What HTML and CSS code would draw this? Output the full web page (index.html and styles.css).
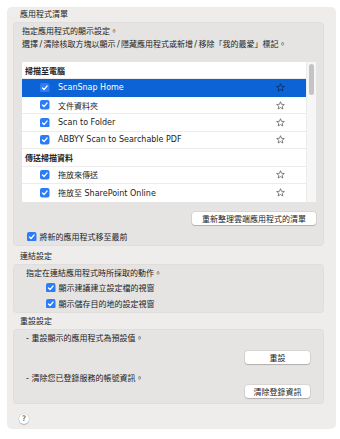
FILE: index.html
```html
<!DOCTYPE html>
<html lang="zh-Hant">
<head>
<meta charset="utf-8">
<link rel="stylesheet" href="styles.css">
</head>
<body>
<div class="panel">
  <div class="title">應用程式清單</div>
  <div class="box box-apps">
    <p class="desc">指定應用程式的顯示設定。<br>選擇<span class="sl">/</span>清除核取方塊以顯示<span class="sl">/</span>隱藏應用程式或新增<span class="sl">/</span>移除「我的最愛」標記。</p>
    <div class="list">
      <div class="rows">
        <div class="row group">掃描至電腦</div>
        <div class="row item selected">
          <svg class="cb" viewBox="0 0 10 10"><rect width="10" height="10" rx="2.2" fill="#2b7cf6"/><path d="M2.6 5.2 L4.3 6.9 L7.5 3.1" fill="none" stroke="#fff" stroke-width="1.4" stroke-linecap="round" stroke-linejoin="round"/></svg>
          <span class="name">ScanSnap Home</span>
          <svg class="star" viewBox="0 0 10 10"><polygon points="5,0.8 6.18,3.68 9.28,3.91 6.9,5.92 7.65,8.94 5,7.3 2.35,8.94 3.1,5.92 0.72,3.91 3.82,3.68"/></svg>
        </div>
        <div class="row item">
          <svg class="cb" viewBox="0 0 10 10"><rect width="10" height="10" rx="2.2" fill="#2b7cf6"/><path d="M2.6 5.2 L4.3 6.9 L7.5 3.1" fill="none" stroke="#fff" stroke-width="1.4" stroke-linecap="round" stroke-linejoin="round"/></svg>
          <span class="name">文件資料夾</span>
          <svg class="star" viewBox="0 0 10 10"><polygon points="5,0.8 6.18,3.68 9.28,3.91 6.9,5.92 7.65,8.94 5,7.3 2.35,8.94 3.1,5.92 0.72,3.91 3.82,3.68"/></svg>
        </div>
        <div class="row item">
          <svg class="cb" viewBox="0 0 10 10"><rect width="10" height="10" rx="2.2" fill="#2b7cf6"/><path d="M2.6 5.2 L4.3 6.9 L7.5 3.1" fill="none" stroke="#fff" stroke-width="1.4" stroke-linecap="round" stroke-linejoin="round"/></svg>
          <span class="name">Scan to Folder</span>
          <svg class="star" viewBox="0 0 10 10"><polygon points="5,0.8 6.18,3.68 9.28,3.91 6.9,5.92 7.65,8.94 5,7.3 2.35,8.94 3.1,5.92 0.72,3.91 3.82,3.68"/></svg>
        </div>
        <div class="row item">
          <svg class="cb" viewBox="0 0 10 10"><rect width="10" height="10" rx="2.2" fill="#2b7cf6"/><path d="M2.6 5.2 L4.3 6.9 L7.5 3.1" fill="none" stroke="#fff" stroke-width="1.4" stroke-linecap="round" stroke-linejoin="round"/></svg>
          <span class="name">ABBYY Scan to Searchable PDF</span>
          <svg class="star" viewBox="0 0 10 10"><polygon points="5,0.8 6.18,3.68 9.28,3.91 6.9,5.92 7.65,8.94 5,7.3 2.35,8.94 3.1,5.92 0.72,3.91 3.82,3.68"/></svg>
        </div>
        <div class="row group">傳送掃描資料</div>
        <div class="row item">
          <svg class="cb" viewBox="0 0 10 10"><rect width="10" height="10" rx="2.2" fill="#2b7cf6"/><path d="M2.6 5.2 L4.3 6.9 L7.5 3.1" fill="none" stroke="#fff" stroke-width="1.4" stroke-linecap="round" stroke-linejoin="round"/></svg>
          <span class="name">拖放來傳送</span>
          <svg class="star" viewBox="0 0 10 10"><polygon points="5,0.8 6.18,3.68 9.28,3.91 6.9,5.92 7.65,8.94 5,7.3 2.35,8.94 3.1,5.92 0.72,3.91 3.82,3.68"/></svg>
        </div>
        <div class="row item last">
          <svg class="cb" viewBox="0 0 10 10"><rect width="10" height="10" rx="2.2" fill="#2b7cf6"/><path d="M2.6 5.2 L4.3 6.9 L7.5 3.1" fill="none" stroke="#fff" stroke-width="1.4" stroke-linecap="round" stroke-linejoin="round"/></svg>
          <span class="name">拖放至 SharePoint Online</span>
          <svg class="star" viewBox="0 0 10 10"><polygon points="5,0.8 6.18,3.68 9.28,3.91 6.9,5.92 7.65,8.94 5,7.3 2.35,8.94 3.1,5.92 0.72,3.91 3.82,3.68"/></svg>
        </div>
      </div>
      <div class="track"><div class="thumb"></div></div>
    </div>
    <div class="btn-row"><span class="btn btn-refresh">重新整理雲端應用程式的清單</span></div>
    <div class="check-row front">
      <svg class="cb" viewBox="0 0 10 10"><rect width="10" height="10" rx="2.2" fill="#2b7cf6"/><path d="M2.6 5.2 L4.3 6.9 L7.5 3.1" fill="none" stroke="#fff" stroke-width="1.4" stroke-linecap="round" stroke-linejoin="round"/></svg>
      <span>將新的應用程式移至最前</span>
    </div>
  </div>

  <div class="title t2">連結設定</div>
  <div class="box box-link">
    <p class="line">指定在連結應用程式時所採取的動作。</p>
    <div class="check-row opt">
      <svg class="cb" viewBox="0 0 10 10"><rect width="10" height="10" rx="2.2" fill="#2b7cf6"/><path d="M2.6 5.2 L4.3 6.9 L7.5 3.1" fill="none" stroke="#fff" stroke-width="1.4" stroke-linecap="round" stroke-linejoin="round"/></svg>
      <span>顯示建議建立設定檔的視窗</span>
    </div>
    <div class="check-row opt">
      <svg class="cb" viewBox="0 0 10 10"><rect width="10" height="10" rx="2.2" fill="#2b7cf6"/><path d="M2.6 5.2 L4.3 6.9 L7.5 3.1" fill="none" stroke="#fff" stroke-width="1.4" stroke-linecap="round" stroke-linejoin="round"/></svg>
      <span>顯示儲存目的地的設定視窗</span>
    </div>
  </div>

  <div class="title t3">重設設定</div>
  <div class="box box-reset">
    <p class="line">- 重設顯示的應用程式為預設值。</p>
    <div class="btn-row r1"><span class="btn btn-small">重設</span></div>
    <p class="line l2">- 清除您已登錄服務的帳號資訊。</p>
    <div class="btn-row"><span class="btn btn-small">清除登錄資訊</span></div>
  </div>

  <div class="help">?</div>
</div>
</body>
</html>
```

FILE: styles.css
```css
* { box-sizing: border-box; }
html, body { margin: 0; padding: 0; background: #ffffff; }
body {
  font-family: "DejaVu Sans", "Noto Sans CJK TC", sans-serif;
  font-size: 8px;
  color: #222222;
}
p { margin: 0; }

.panel {
  margin: 7px 0 0 7px;
  width: 329px;
  height: 422px;
  background: #eeedeb;
  border-radius: 5px;
  padding: 2px 12px 0 6px;
  display: flex;
  flex-direction: column;
}

.title {
  line-height: 12px;
  height: 12px;
  padding-left: 7px;
  margin-bottom: 1px;
}
.title.t2 { margin-top: 5px; }
.title.t3 { margin-top: 3px; }

.box {
  background: #e5e4e2;
  border-radius: 4px;
  box-shadow: inset 0 0 0 1px rgba(0,0,0,0.025);
}

.box-apps {
  padding: 3px 8px 3px 9px;
  display: flex;
  flex-direction: column;
}
.desc { line-height: 13px; }
.sl { padding: 0 1.4px; }

.list {
  margin-top: 11px;
  background: #ffffff;
  display: flex;
}
.rows { flex: 1; }
.row {
  height: 17.45px;
  display: flex;
  align-items: center;
  border-bottom: 1px solid #ececec;
}
.row.last { border-bottom: none; }
.row.group {
  font-weight: bold;
  padding-left: 3px;
}
.row.item { padding-left: 18px; padding-right: 21px; }
.row.selected {
  background: #0b63d6;
  color: #ffffff;
  border-bottom-color: #0b63d6;
}
.cb { width: 9.5px; height: 9.5px; flex: none; }
.row .name { margin-left: 8.5px; }
.star {
  width: 9px;
  height: 9px;
  margin-left: auto;
  fill: none;
  stroke: #555555;
  stroke-width: 0.8;
  stroke-linejoin: round;
}
.selected .star { stroke: #14264a; }

.track {
  width: 10px;
  background: #f6f6f6;
  border-left: 1px solid #ececec;
  padding: 2px 2px 0 2px;
}
.thumb {
  width: 5px;
  height: 31px;
  border-radius: 3px;
  background: #c4c4c4;
}

.btn-row {
  display: flex;
  justify-content: flex-end;
  margin-top: 10px;
}
.btn {
  display: flex;
  align-items: center;
  justify-content: center;
  height: 13px;
  background: #ffffff;
  border-radius: 3px;
  box-shadow: 0 0 0 0.5px rgba(0,0,0,0.12), 0 1px 1px rgba(0,0,0,0.18);
  color: #222222;
}
.btn-refresh { width: 124px; }
.btn-small { width: 65px; }

.check-row {
  display: flex;
  align-items: center;
  gap: 3px;
}
.check-row.front {
  margin-top: 6px;
  height: 12px;
  padding-left: 5px;
}
.check-row.opt {
  height: 16px;
  padding-left: 20px;
}

.box-link {
  padding: 3px 0 1px 13px;
}
.line { line-height: 13px; }

.box-reset {
  padding: 4px 14px 6px 13px;
}
.box-reset .line { line-height: 12px; }
.box-reset .btn-row.r1 { margin-top: 6px; }
.box-reset .line.l2 { margin-top: 9px; }
.box-reset .btn-row { margin-top: 0; }

.help {
  margin: 10px 0 0 6px;
  width: 10px;
  height: 10px;
  border-radius: 50%;
  background: #ffffff;
  box-shadow: 0 0 0 0.5px rgba(0,0,0,0.12), 0 1px 1px rgba(0,0,0,0.18);
  font-size: 7.5px;
  line-height: 10px;
  text-align: center;
  color: #333333;
}
```
